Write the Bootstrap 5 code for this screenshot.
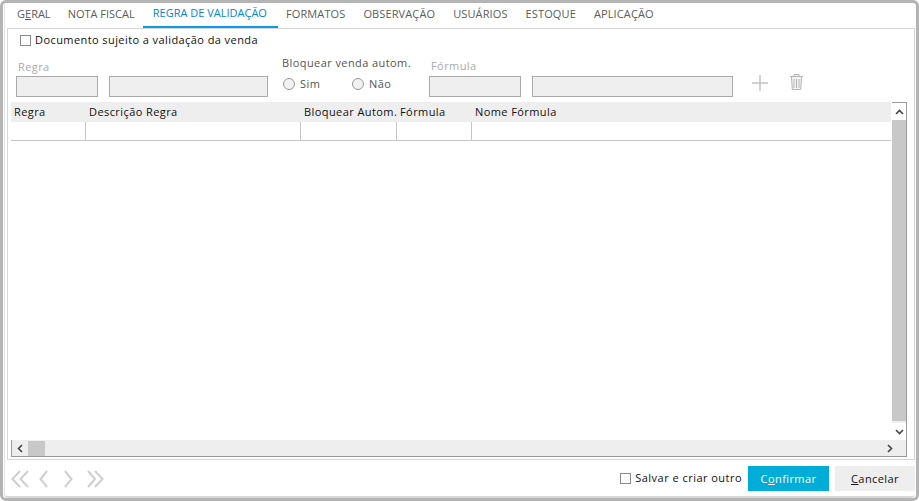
<!DOCTYPE html>
<html lang="pt"><head><meta charset="utf-8"><title>Regra de validação</title>
<link rel="stylesheet" href="https://cdn.jsdelivr.net/npm/bootstrap@5.3.0/dist/css/bootstrap.min.css">
<style>
html,body{height:501px;overflow:hidden;background:#fff}
body{font-family:"Open Sans","Noto Sans",sans-serif;font-size:11px;color:#111;letter-spacing:.42px}
.janela{width:919px;height:501px;border:3px solid #b4b4b4;border-radius:6px;padding:0 1px;background:#fff}
.interno{height:100%;border-left:1px solid #e2e2e2;border-bottom:2px solid #d8d8d8;border-radius:0 0 4px 4px;padding:0 0 0 2px;display:flex;flex-direction:column}
.abas{height:23px;padding-left:1px;flex-wrap:nowrap}
.aba{padding:3px 9px 0;line-height:16px;height:25px;color:#5c5c5c;font-size:11px;white-space:nowrap;letter-spacing:.12px;text-decoration:none}
.aba1,.aba2{letter-spacing:0}
.aba1{padding-right:8px}
.aba.ativa{padding:2px 11px 0 10px;letter-spacing:0;color:#0b82cf;border-bottom:2px solid #0a9ae6;margin:0 -1px}
.painel{height:432px;width:908px;border:1px solid #d6d6d6;margin-top:2px;padding:0 3px 2px;display:flex;flex-direction:column}
.marca{width:11px;height:11px;border:1px solid #8b8b8b;background:#fff;flex:none}
.ln1{height:22px;padding-left:9px;gap:4px}
.formlin{height:51px;color:#555}
.rot{color:#aaa;line-height:14px}
.ent{height:21px;border:1px solid #aaa;background:#efefef}
.radio{width:12px;height:12px;border:1px solid #999;border-radius:50%;background:#f2f2f2;flex:none}
.grade{flex:1;min-height:0;border:solid #999;border-width:0 1px 1px 0;display:flex;flex-direction:column;width:896px}
.corpo{flex:1;display:flex;min-height:0}
.dados{flex:1;min-width:0}
.lincab{height:20px;background:#eee;line-height:20px}
.lincab span{display:block;flex:none;padding-left:3px;white-space:nowrap}
.lindad{height:19px;border-bottom:1px solid #c6c6c6}
.lindad span{display:block;flex:none;height:18px;border-right:1px solid #c6c6c6}
.c1{width:75px}.c2{width:215px}.c3{width:96px}.c4{width:75px}
.vbar{width:14px;margin-left:1px;background:#eee;border-top:1px solid #999;display:flex;flex-direction:column}
.vbtn{height:17px;display:flex;align-items:center;justify-content:center;flex:none;background:#fff}
.vpol{height:301px;background:#c8c8c8;flex:none}
.vres{flex:1}
.hbar{height:16px;background:#eee;display:flex;align-items:center;border-left:1px solid #999}
.hbtn{width:16px;height:15px;display:flex;align-items:center;justify-content:center;flex:none}
.hpol{width:17px;height:15px;background:#c8c8c8;flex:none}
.rod{height:35px;padding:1px 0 0 4px}
.navsvg{stroke:#cfcfcf;stroke-width:2;fill:none;margin-top:1px}
.botao{height:25px;border:0;border-radius:0;padding:0;font-size:11px;letter-spacing:.42px;line-height:23px}
.conf{width:81px;background:#00acd8;color:#fff;margin-left:6px}
.canc{width:80px;background:#eee;color:#111;margin-left:6px}
.btn.conf:hover{background:#00acd8;color:#fff}
.tsalv{letter-spacing:.47px}
.sec1{margin:0 14px 0 5px}
.tregra{padding:9px 0 0 2px;height:25px}
.e1a{width:82px;margin-right:11px}.e1b{width:159px}
.sec2{width:147px}
.tbloq{line-height:14px;padding-top:5px;height:21px}
.lrad{height:24px;padding-left:1px}
.tsim{margin-left:5px;width:52px}.tnao{margin-left:5px}
.tform{padding:8px 0 0 2px;height:23px}
.e2a{width:92px;margin-right:11px}.e2b{width:201px}
.imais{margin:0 0 6px 18px}.ilixo{margin:-9px 0 0 20px}
</style></head>
<body>
<div class="janela"><div class="interno">
  <div class="nav abas d-flex">
    <a class="aba aba1">G<u>E</u>RAL</a>
    <a class="aba aba2">NOTA FISCAL</a>
    <a class="aba ativa">REGRA DE VALIDAÇÃO</a>
    <a class="aba">FORMATOS</a>
    <a class="aba">OBSERVAÇÃO</a>
    <a class="aba">USUÁRIOS</a>
    <a class="aba">ESTOQUE</a>
    <a class="aba">APLICAÇÃO</a>
  </div>
  <div class="painel">
    <div class="ln1 d-flex align-items-center"><span class="marca"></span><span>Documento sujeito a validação da venda</span></div>
    <div class="formlin d-flex">
      <div class="sec1">
        <div class="rot tregra">Regra</div>
        <div class="d-flex"><div class="ent e1a"></div><div class="ent e1b"></div></div>
      </div>
      <div class="sec2">
        <div class="tbloq">Bloquear venda autom.</div>
        <div class="d-flex align-items-center lrad"><span class="radio"></span><span class="tsim">Sim</span><span class="radio"></span><span class="tnao">Não</span></div>
      </div>
      <div>
        <div class="rot tform">Fórmula</div>
        <div class="d-flex align-items-center"><div class="ent e2a"></div><div class="ent e2b"></div>
          <svg class="imais" width="18" height="18" viewBox="0 0 18 18"><path d="M9 1v16M1 9h16" stroke="#c4c4c4" stroke-width="1.5" fill="none"/></svg>
          <svg class="ilixo" width="15" height="18" viewBox="0 0 15 18"><path d="M1 3.500h13M5 3V1.500h5V3M2.500 4l.8 12.500h8.400L12.500 4M5 6v9M7.500 6v9M10 6v9" stroke="#b5b5b5" stroke-width="1" fill="#f4f4f4"/></svg>
        </div>
      </div>
    </div>
    <div class="grade">
      <div class="corpo">
        <div class="dados">
          <div class="lincab d-flex"><span class="c1">Regra</span><span class="c2">Descrição Regra</span><span class="c3">Bloquear Autom.</span><span class="c4">Fórmula</span><span>Nome Fórmula</span></div>
          <div class="lindad d-flex"><span class="c1"></span><span class="c2"></span><span class="c3"></span><span class="c4"></span></div>
        </div>
        <div class="vbar">
          <div class="vbtn"><svg width="9" height="6" viewBox="0 0 9 6"><path d="M1 5l3.500-3.500L8 5" stroke="#444" stroke-width="1.600" fill="none"/></svg></div>
          <div class="vpol"></div><div class="vres"></div>
          <div class="vbtn"><svg width="9" height="6" viewBox="0 0 9 6"><path d="M1 1l3.500 3.500L8 1" stroke="#444" stroke-width="1.600" fill="none"/></svg></div>
        </div>
      </div>
      <div class="hbar">
        <div class="hbtn"><svg width="6" height="9" viewBox="0 0 6 9"><path d="M5 1L1.500 4.500 5 8" stroke="#444" stroke-width="1.600" fill="none"/></svg></div>
        <div class="hpol"></div>
        <div class="ms-auto hbtn me-2"><svg width="6" height="9" viewBox="0 0 6 9"><path d="M1 1l3.500 3.500L1 8" stroke="#444" stroke-width="1.600" fill="none"/></svg></div>
      </div>
    </div>
  </div>
  <div class="rod d-flex align-items-center">
    <svg class="navsvg" width="96" height="18" viewBox="0 0 96 18"><path d="M9 1L1.500 9 9 17M17 1L9.500 9 17 17M36 1l-6.500 8 6.500 8M54 1l6.500 8-6.500 8M77 1l7 8-7 8M84 1l7.500 8-7.500 8"/></svg>
    <div class="ms-auto d-flex align-items-center">
      <span class="marca"></span><span class="ms-1 tsalv">Salvar e criar outro</span>
      <button class="btn botao conf" type="button">C<u>o</u>nfirmar</button>
      <button class="btn botao canc" type="button"><u>C</u>ancelar</button>
    </div>
  </div>
</div></div>
</body></html>
